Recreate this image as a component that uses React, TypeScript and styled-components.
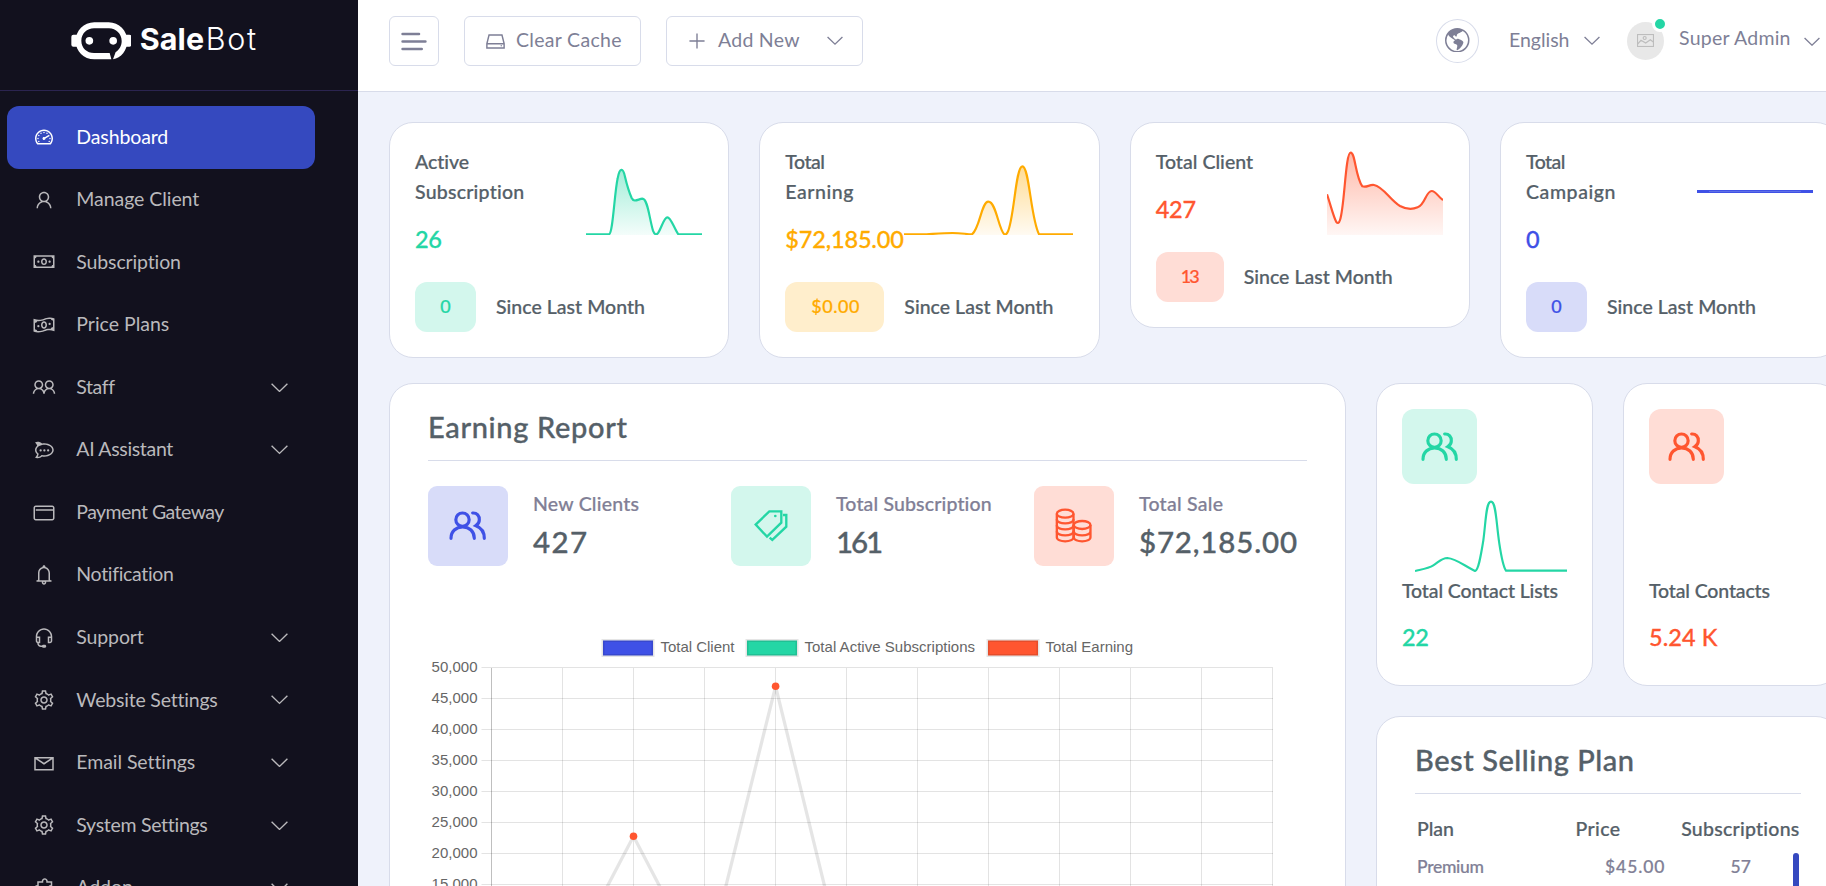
import React, { useLayoutEffect, useRef, useState } from "react";
import styled, { createGlobalStyle } from "styled-components";
import {
  LiaTachometerAltSolid,
  LiaUser,
  LiaMoneyBillSolid,
  LiaMoneyBillWaveSolid,
  LiaUserFriendsSolid,
  LiaRocketchat,
  LiaCreditCard,
  LiaBell,
  LiaHeadsetSolid,
  LiaCogSolid,
  LiaEnvelope,
  LiaPuzzlePieceSolid,
  LiaHddSolid,
  LiaPlusSolid,
} from "react-icons/lia";
import { BsGlobeAmericas } from "react-icons/bs";

const color = {
  blue: "#3f51e6",
  blueSoft: "#d8dcf9",
  green: "#24d6a5",
  greenSoft: "#d3f7ed",
  orange: "#ff5630",
  orangeSoft: "#ffddd6",
  yellow: "#ffab00",
  yellowSoft: "#ffeecc",
  heading: "#556068",
  muted: "#7e7f96",
  line: "#d8dcea",
  sidebar: "#12111e",
  active: "#3549bf",
};

const Global = createGlobalStyle`
  * { box-sizing: border-box; }
  html, body { margin: 0; height: 886px; overflow: hidden; }
  body { background: #eff2fb; font-family: Lato, "Open Sans", sans-serif; }
`;

/* ---------- text ---------- */

const TextBox = styled.span<{ $size: number; $lh: number; $weight: number; $color: string; $w: number; $lift: number; $font?: string }>`
  display: block;
  flex: none;
  width: ${(p) => p.$w}px;
  padding: 1px 0 ${(p) => p.$lift}px;
  margin-bottom: -1px;
  font-size: ${(p) => p.$size}px;
  line-height: ${(p) => p.$lh}px;
  font-weight: ${(p) => p.$weight};
  color: ${(p) => p.$color};
  font-family: ${(p) => p.$font || "inherit"};
  -webkit-text-stroke: ${(p) => (p.$weight === 500 ? "0.012em" : "0")};
  white-space: nowrap;
`;

type TextProps = {
  children: string;
  w: number;
  size?: number;
  lh?: number;
  weight?: number;
  color?: string;
  lift?: number;
  font?: string;
};

/* A one-line text whose tracking is adjusted so that it fills the width w. */
function Text({ children, w, size = 19.5, lh = 30, weight = 500, color: c = color.heading, lift = 0, font }: TextProps) {
  const ref = useRef<HTMLSpanElement>(null);
  const [tracking, setTracking] = useState(0);
  useLayoutEffect(() => {
    if (!ref.current) return;
    const natural = ref.current.getBoundingClientRect().width;
    setTracking((w + 1 - natural) / Math.max(1, children.length - 1));
  }, [children, w]);
  return (
    <TextBox $size={size} $lh={lh} $weight={weight} $color={c} $w={w} $lift={lift} $font={font}>
      <span ref={ref} style={{ letterSpacing: tracking }}>
        {children}
      </span>
    </TextBox>
  );
}

/* ---------- icons ---------- */

const Chevron = ({ w = 17 }: { w?: number }) => (
  <svg width={w} height={9.5} viewBox="0 0 17 9.5" fill="none" stroke="currentColor" strokeWidth="1.4">
    <path d="M.6 .8 8.5 8.4 16.4 .8" />
  </svg>
);

const PeopleIcon = () => (
  <svg width="37.3" height="29.3" viewBox="184 184 112 88" fill="none" stroke="currentColor" strokeWidth="9.5" strokeLinecap="round">
    <circle cx="224.500" cy="210" r="20" />
    <path d="M190 266C190 245 205 232 225 232C245 232 260 245 260 266" />
    <path d="M255 190C268 189 276 199 275 211C275 218 272 223 265 228C281 234 290 248 290 266" />
  </svg>
);

const TagsIcon = () => (
  <svg width="35.3" height="33.3" viewBox="1120 420 106 100" fill="none" stroke="currentColor" strokeWidth="7">
    <path d="M1169 427H1205V461L1162 503L1128 467Z" />
    <path d="M1210 438H1220V473L1178 513L1170 506" />
    <circle cx="1187" cy="441" r="4" fill="currentColor" stroke="none" />
  </svg>
);

const CoinsIcon = () => (
  <svg width="37.3" height="35.3" viewBox="586 415 112 106" fill="none" stroke="currentColor" strokeWidth="7">
    <ellipse cx="616.500" cy="432" rx="25" ry="12" />
    <path d="M591.500 432V503C591.500 519 641.500 519 641.500 503V432" />
    <path d="M591.500 449C591.500 465 641.500 465 641.500 449M591.500 467C591.500 483 641.500 483 641.500 467M591.500 485C591.500 501 641.500 501 641.500 485" />
    <ellipse cx="667.500" cy="466" rx="25" ry="12" />
    <path d="M642.500 466V503C642.500 519 692.500 519 692.500 503V466M642.500 485C642.500 501 692.500 501 692.500 485" />
  </svg>
);

const MenuIcon = () => (
  <svg width="26" height="19" viewBox="0 0 26 19" stroke="currentColor" strokeWidth="2.600" strokeLinecap="round">
    <path d="M1.600 2H18M1.600 9.500H24.400M1.600 17H20.700" />
  </svg>
);

const BotIcon = () => (
  <svg width="60.700" height="38" viewBox="212 65 182 114">
    <path d="M219 103H232V139H219Q213 139 213 133V109Q213 103 219 103ZM374 103H387Q393 103 393 109V133Q393 139 387 139H374Z" fill="#fff" />
    <path
      fill="#fff"
      fillRule="evenodd"
      d="M282 66H325C356 66 381 91 381 122C381 150 362 173 338 177L346 155C357 149 364 136 364 122C364 101 347 84 326 84H281C260 84 243 100 243 121C243 143 260 158 281 158H328L333 177H282C250 177 226 153 226 122C226 91 250 66 282 66Z"
    />
    <circle cx="267" cy="121.500" r="11.500" fill="#fff" />
    <circle cx="338.500" cy="121.500" r="11.500" fill="#fff" />
  </svg>
);

const PictureIcon = () => (
  <svg width="17" height="13" viewBox="708 102 51 39" fill="none" stroke="#bdbdbd" strokeWidth="3.500">
    <rect x="709.500" y="103.500" width="48" height="36" />
    <path d="M710 132 720 121 734 129 748 119 757 126" />
    <circle cx="731" cy="114" r="4.500" />
  </svg>
);

/* ---------- shell ---------- */

const Page = styled.div`
  display: flex;
  height: 886px;
  width: 1826px;
  overflow: hidden;
`;

const Sidebar = styled.aside`
  flex: none;
  width: 358px;
  background: ${color.sidebar};
  color: #bab9bc;
`;

const Brand = styled.div`
  height: 91px;
  display: flex;
  align-items: flex-start;
  padding: 21.5px 0 0 70.5px;
  border-bottom: 1px solid #2b2450;
`;

const BrandName = styled.div`
  display: flex;
  gap: 2.5px;
  margin: -3px 0 0 8.5px;
`;

const Nav = styled.nav`
  padding: 15px 0 0 7px;
  width: 315px;
`;

const NavItem = styled.a<{ $active?: boolean }>`
  display: flex;
  align-items: center;
  height: 62.55px;
  padding: 0 27.5px 0 25px;
  gap: 20.3px;
  border-radius: 12px;
  background: ${(p) => (p.$active ? color.active : "transparent")};
  color: ${(p) => (p.$active ? "#fff" : "inherit")};
  svg { flex: none; }
  > svg:last-child { margin-left: auto; }
`;

const Main = styled.main`
  flex: none;
  width: 1483px;
`;

const Header = styled.header`
  display: flex;
  height: 92px;
  padding: 16px 0 0 31px;
  background: #fff;
  border-bottom: 1px solid ${color.line};
  color: ${color.muted};
`;

const HeaderButton = styled.button<{ $w: number; $gap?: number }>`
  display: flex;
  flex: none;
  align-items: center;
  width: ${(p) => p.$w}px;
  height: 50px;
  margin-right: 25px;
  padding: 0 0 0 ${(p) => (p.$w === 50 ? 11 : 19)}px;
  gap: ${(p) => p.$gap || 0}px;
  background: #fff;
  border: 1px solid ${color.line};
  border-radius: 6px;
  font-family: inherit;
  color: inherit;
  text-align: left;
  > svg { flex: none; }
  > svg:last-child { margin-left: ${(p) => (p.$gap === 10 ? 18 : 0)}px; }
`;

const HeaderRight = styled.div`
  display: flex;
  align-items: center;
  height: 50px;
  margin-left: 548px;
  > svg { flex: none; }
`;

const RoundButton = styled.div`
  display: flex;
  align-items: center;
  justify-content: center;
  width: 43px;
  height: 44px;
  padding-bottom: 2px;
  border: 1px solid ${color.line};
  border-radius: 50%;
  margin-right: 30px;
`;

const Language = styled.div`
  display: flex;
  align-items: center;
  gap: 15px;
  margin-right: 27px;
`;

const Avatar = styled.div`
  position: relative;
  display: flex;
  align-items: center;
  justify-content: center;
  width: 37px;
  height: 38px;
  padding-bottom: 1px;
  border-radius: 50%;
  background: #e8e8e8;
  margin-right: 15.5px;
`;

const Presence = styled.i`
  position: absolute;
  right: -4px;
  top: -6px;
  width: 16px;
  height: 16px;
  border: 3px solid #fff;
  border-radius: 50%;
  background: ${color.green};
`;

const ProfileChevron = styled.span`
  display: flex;
  margin: 1px 0 0 14px;
`;

/* ---------- cards ---------- */

const Content = styled.div`
  padding: 30px 0 0 31px;
`;

const StatGrid = styled.div`
  display: grid;
  grid-template-columns: repeat(4, 340.33px);
  column-gap: 30px;
  align-items: start;
`;

const Card = styled.section<{ $pad: string; $w?: number; $h?: number }>`
  flex: none;
  width: ${(p) => (p.$w ? p.$w + "px" : "auto")};
  height: ${(p) => (p.$h ? p.$h + "px" : "auto")};
  padding: ${(p) => p.$pad};
  background: #fff;
  border: 1px solid ${color.line};
  border-radius: 24px;
`;

const StatTop = styled.div`
  display: flex;
  justify-content: space-between;
  align-items: flex-start;
  > svg { flex: none; margin: 2.3px 1px -20px 0; }
`;

const StatTexts = styled.div`
  width: 117px;
`;

const Figure = styled.div<{ $top: number }>`
  margin-top: ${(p) => p.$top}px;
`;

const StatBottom = styled.div`
  display: flex;
  align-items: center;
  gap: 20px;
  margin-top: 26.5px;
`;

const Badge = styled.div<{ $bg: string; $w: number }>`
  display: flex;
  align-items: center;
  justify-content: center;
  width: ${(p) => p.$w}px;
  height: 50px;
  border-radius: 12px;
  background: ${(p) => p.$bg};
`;

const Columns = styled.div`
  display: flex;
  gap: 30px;
  margin-top: 25px;
`;

const CardTitle = styled.div`
  padding-bottom: 14.5px;
  border-bottom: 1px solid ${color.line};
`;

const KpiRow = styled.div`
  display: grid;
  grid-template-columns: repeat(3, 303px);
  margin-top: 25px;
`;

const Kpi = styled.div`
  display: flex;
  gap: 25px;
`;

const IconTile = styled.div<{ $size: number; $bg: string; $fg: string }>`
  display: flex;
  flex: none;
  align-items: center;
  justify-content: center;
  width: ${(p) => p.$size}px;
  height: ${(p) => p.$size}px;
  border-radius: ${(p) => (p.$size === 80 ? 9 : 12)}px;
  background: ${(p) => p.$bg};
  color: ${(p) => p.$fg};
`;

const KpiTexts = styled.div`
  padding-top: 2px;
`;

const ChartSlot = styled.div`
  height: 320px;
  margin-top: 64px;
`;

const RightColumn = styled.div`
  flex: none;
  width: 464px;
`;

const ContactRow = styled.div`
  display: flex;
  gap: 30px;
  margin-bottom: 30px;
`;

const ContactChart = styled.div`
  height: 73px;
  margin: 14.7px 0 3px 13px;
`;

const PlanHead = styled.div`
  display: grid;
  grid-template-columns: 158.5px 105.7px 118px;
  padding-left: 2px;
  margin-top: 19px;
`;

const PlanBody = styled.div`
  display: flex;
  justify-content: space-between;
  width: 384px;
  height: 200px;
  margin-top: 10px;
`;

const PlanRow = styled.div`
  display: grid;
  grid-template-columns: 188px 125.5px 20px;
  height: 30px;
  margin-top: -2.5px;
  padding-left: 2px;
`;

const ScrollThumb = styled.div`
  width: 6px;
  height: 160px;
  border-radius: 3px;
  background: ${color.active};
`;

/* ---------- data ---------- */

const nav = [
  { label: "Dashboard", w: 91, icon: LiaTachometerAltSolid, active: true },
  { label: "Manage Client", w: 122, icon: LiaUser },
  { label: "Subscription", w: 104, icon: LiaMoneyBillSolid },
  { label: "Price Plans", w: 92, icon: LiaMoneyBillWaveSolid },
  { label: "Staff", w: 37, icon: LiaUserFriendsSolid, sub: true },
  { label: "AI Assistant", w: 96, icon: LiaRocketchat, sub: true },
  { label: "Payment Gateway", w: 147, icon: LiaCreditCard },
  { label: "Notification", w: 97, icon: LiaBell },
  { label: "Support", w: 66.5, icon: LiaHeadsetSolid, sub: true },
  { label: "Website Settings", w: 140, icon: LiaCogSolid, sub: true },
  { label: "Email Settings", w: 117.5, icon: LiaEnvelope, sub: true },
  { label: "System Settings", w: 130, icon: LiaCogSolid, sub: true },
  { label: "Addon", w: 55.5, icon: LiaPuzzlePieceSolid, sub: true },
];

type Stat = {
  id: string;
  lines: [string, number][];
  value: [string, number];
  delta: [string, number];
  badge: number;
  fg: string;
  bg: string;
  x: number;
  path?: string;
};

const stats: Stat[] = [
  {
    id: "active",
    lines: [["Active", 53.5], ["Subscription", 108.5]],
    value: ["26", 26],
    delta: ["0", 10.5],
    badge: 61,
    fg: color.green,
    bg: color.greenSoft,
    x: 621,
    path: "M621 373H690C702 370 706 250 716 205C722 172 732 172 738 200C745 230 752 250 758 264C765 279 778 267 790 266C806 266 810 320 822 362C826 373 832 377 838 368C848 352 855 322 865 322C876 322 885 355 898 373H969",
  },
  {
    id: "earning",
    lines: [["Total", 38.5], ["Earning", 67]],
    value: ["$72,185.00", 117.5],
    delta: ["$0.00", 47],
    badge: 99,
    fg: color.yellow,
    bg: color.yellowSoft,
    x: 462,
    path: "M462 373H530C560 371 580 369 608 369C635 369 650 373 666 373C690 355 694 275 715 275C738 275 745 355 762 372C766 375 770 373 773 366C792 330 797 169 817 169C838 169 842 325 867 373H969",
  },
  {
    id: "client",
    lines: [["Total Client", 96.5]],
    value: ["427", 39.5],
    delta: ["13", 18],
    badge: 68,
    fg: color.orange,
    bg: color.orangeSoft,
    x: 621,
    path: "M621 253C632 285 640 320 649 336C653 341 657 340 660 330C674 290 676 128 692 128C706 128 706 200 727 229C740 234 748 223 762 225C790 230 810 270 840 288C855 296 875 300 893 292C915 285 918 243 935 243C948 243 955 262 969 270",
  },
  {
    id: "campaign",
    lines: [["Total", 38.5], ["Campaign", 88.5]],
    value: ["0", 13],
    delta: ["0", 10.5],
    badge: 61,
    fg: color.blue,
    bg: color.blueSoft,
    x: 621,
  },
];

function Spark({ s }: { s: Stat }) {
  const w = 969 - s.x;
  return (
    <svg width={w / 3} height="88" viewBox={`${s.x} 114 ${w} 264`}>
      {s.path ? (
        <>
          <defs>
            <linearGradient id={s.id} x1="0" y1="0" x2="0" y2="1">
              <stop offset="0" stopColor={s.fg} stopOpacity=".42" />
              <stop offset="1" stopColor={s.fg} stopOpacity=".05" />
            </linearGradient>
            <clipPath id={s.id + "-clip"}>
              <rect x={s.x} y="114" width={w} height="261" />
            </clipPath>
          </defs>
          <g clipPath={`url(#${s.id}-clip)`}>
            <path d={`${s.path}V375H${s.x}Z`} fill={`url(#${s.id})`} />
            <path d={s.path} fill="none" stroke={s.fg} strokeWidth="6.500" />
          </g>
        </>
      ) : (
        <>
          <rect x="621" y="240" width="348" height="9" fill={s.fg} />
          <rect x="657" y="243" width="276" height="3" fill="#5f6fe6" />
        </>
      )}
    </svg>
  );
}

function StatCard({ s }: { s: Stat }) {
  return (
    <Card $pad="23px 25px 25px">
      <StatTop>
        <StatTexts>
          {s.lines.map(([t, w]) => (
            <Text key={t} w={w}>{t}</Text>
          ))}
          <Figure $top={13.5}>
            <Text w={s.value[1]} size={23.5} lh={36} color={s.fg}>{s.value[0]}</Text>
          </Figure>
        </StatTexts>
        <Spark s={s} />
      </StatTop>
      <StatBottom>
        <Badge $bg={s.bg} $w={s.badge}>
          <Text w={s.delta[1]} size={18} color={s.fg} lift={4}>{s.delta[0]}</Text>
        </Badge>
        <Text w={148} lift={2.5}>Since Last Month</Text>
      </StatBottom>
    </Card>
  );
}

const kpis = [
  { label: "New Clients", w: 105, value: "427", vw: 53, icon: <PeopleIcon />, fg: color.blue, bg: color.blueSoft },
  { label: "Total Subscription", w: 155, value: "161", vw: 46, icon: <TagsIcon />, fg: color.green, bg: color.greenSoft },
  { label: "Total Sale", w: 83, value: "$72,185.00", vw: 157, icon: <CoinsIcon />, fg: color.orange, bg: color.orangeSoft },
];

const legend = [
  { label: "Total Client", x: 603, fg: color.blue, w: 74 },
  { label: "Total Active Subscriptions", x: 747, fg: color.green, w: 170.5 },
  { label: "Total Earning", x: 988, fg: color.orange, w: 87.5 },
];

const columns = Array.from({ length: 12 }, (_, i) => 491.5 + i * 71.03);
const ticks = Array.from({ length: 11 }, (_, i) => ({ y: 667.5 + i * 31, label: i === 10 ? "0" : `${50 - i * 5},000` }));
const points: [number, number][] = [[491.5, 977], [562.5, 972], [633.5, 836.3], [704.5, 972], [775.6, 686.3], [846.6, 976]];

const EarningChart = () => (
  <svg width="880" height="360" viewBox="428 630 880 360" fontFamily='"Liberation Sans", Arial, sans-serif' fontSize="15" fill="#666">
    {legend.map((l) => (
      <g key={l.label}>
        <rect x={l.x} y="640.500" width="50" height="15" fill={l.fg} />
        <rect x={l.x} y="640.500" width="50" height="15" fill="none" stroke="#000" strokeOpacity=".1" strokeWidth="3" />
        <text x={l.x + 57.5} y="652" textLength={l.w}>{l.label}</text>
      </g>
    ))}
    {columns.map((x, i) => (
      <path key={x} d={`M${Math.floor(x) + 0.5} 668V987`} stroke="#000" strokeOpacity={i === 0 ? 0.25 : 0.11} />
    ))}
    {ticks.map((t) => (
      <g key={t.y}>
        <path d={`M481.500 ${t.y}H1273`} stroke="#000" strokeOpacity=".11" />
        <text x="477.500" y={t.y + 4.5} textAnchor="end">{t.label}</text>
      </g>
    ))}
    <polyline points={points.map((p) => p.join(",")).join(" ")} fill="none" stroke="#000" strokeOpacity=".1" strokeWidth="3.300" />
    {points.map(([x, y]) => (
      <circle key={x} cx={x} cy={y} r="3.800" fill={color.orange} />
    ))}
  </svg>
);

export default function App() {
  return (
    <Page>
      <Global />
      <Sidebar>
        <Brand>
          <BotIcon />
          <BrandName>
            <Text w={63.5} size={30.5} lh={38} weight={700} color="#fff" font="Inter, sans-serif">Sale</Text>
            <Text w={49.5} size={30.5} lh={38} weight={300} color="#fff" font="Inter, sans-serif">Bot</Text>
          </BrandName>
        </Brand>
        <Nav>
          {nav.map(({ label, w, icon: Icon, active, sub }) => (
            <NavItem key={label} $active={active}>
              <Icon size={24} />
              <Text w={w} weight={400} color="inherit" lift={3.4}>{label}</Text>
              {sub && <Chevron />}
            </NavItem>
          ))}
        </Nav>
      </Sidebar>
      <Main>
        <Header>
          <HeaderButton $w={50}><MenuIcon /></HeaderButton>
          <HeaderButton $w={177} $gap={9}>
            <LiaHddSolid size={23} />
            <Text w={104.5} weight={400} color="inherit" lift={3.4}>Clear Cache</Text>
          </HeaderButton>
          <HeaderButton $w={197} $gap={10}>
            <LiaPlusSolid size={22} />
            <Text w={80.5} weight={400} color="inherit" lift={3.4}>Add New</Text>
            <Chevron w={16} />
          </HeaderButton>
          <HeaderRight>
            <RoundButton><BsGlobeAmericas size={24.5} /></RoundButton>
            <Language>
              <Text w={59.5} weight={400} color="inherit" lift={3.4}>English</Text>
              <Chevron w={16} />
            </Language>
            <Avatar>
              <PictureIcon />
              <Presence />
            </Avatar>
            <Text w={110.5} weight={400} color="inherit" lift={8}>Super Admin</Text>
            <ProfileChevron><Chevron w={16} /></ProfileChevron>
          </HeaderRight>
        </Header>
        <Content>
          <StatGrid>
            {stats.map((s) => (
              <StatCard key={s.id} s={s} />
            ))}
          </StatGrid>
          <Columns>
            <Card $w={957} $pad="21.5px 38px">
              <CardTitle>
                <Text w={198} size={29} lh={40}>Earning Report</Text>
              </CardTitle>
              <KpiRow>
                {kpis.map((k) => (
                  <Kpi key={k.label}>
                    <IconTile $size={80} $bg={k.bg} $fg={k.fg}>{k.icon}</IconTile>
                    <KpiTexts>
                      <Text w={k.w} color="#817f96">{k.label}</Text>
                      <Figure $top={3}>
                        <Text w={k.vw} size={29.5} lh={40}>{k.value}</Text>
                      </Figure>
                    </KpiTexts>
                  </Kpi>
                ))}
              </KpiRow>
              <ChartSlot><EarningChart /></ChartSlot>
            </Card>
            <RightColumn>
              <ContactRow>
                <Card $w={217} $h={303} $pad="25px">
                  <IconTile $size={75} $bg={color.greenSoft} $fg={color.green}><PeopleIcon /></IconTile>
                  <ContactChart>
                    <svg width="152" height="73" viewBox="165 386 456 219">
                      <path
                        d="M165 602C185 597 205 594 220 585C235 576 245 563 262 563C290 565 315 588 345 602C355 600 362 560 370 510C378 450 378 394 393 394C408 394 408 450 418 520C424 560 430 590 438 601H621"
                        fill="none"
                        stroke={color.green}
                        strokeWidth="6.500"
                      />
                    </svg>
                  </ContactChart>
                  <Text w={155}>Total Contact Lists</Text>
                  <Figure $top={13}>
                    <Text w={26} size={23.5} lh={36} color={color.green}>22</Text>
                  </Figure>
                </Card>
                <Card $w={217} $h={303} $pad="25px">
                  <IconTile $size={75} $bg={color.orangeSoft} $fg={color.orange}><PeopleIcon /></IconTile>
                  <ContactChart />
                  <Text w={120}>Total Contacts</Text>
                  <Figure $top={13}>
                    <Text w={67.5} size={23.5} lh={36} color={color.orange}>5.24 K</Text>
                  </Figure>
                </Card>
              </ContactRow>
              <Card $pad="21.5px 38px">
                <CardTitle>
                  <Text w={218} size={29} lh={40}>Best Selling Plan</Text>
                </CardTitle>
                <PlanHead>
                  <Text w={36}>Plan</Text>
                  <Text w={43.5}>Price</Text>
                  <Text w={117.5}>Subscriptions</Text>
                </PlanHead>
                <PlanBody>
                  <PlanRow>
                    <Text w={66} size={17.5} color="#817f96">Premium</Text>
                    <Text w={58.5} size={17.5} color="#817f96">$45.00</Text>
                    <Text w={19.5} size={17.5} color="#817f96">57</Text>
                  </PlanRow>
                  <ScrollThumb />
                </PlanBody>
              </Card>
            </RightColumn>
          </Columns>
        </Content>
      </Main>
    </Page>
  );
}
